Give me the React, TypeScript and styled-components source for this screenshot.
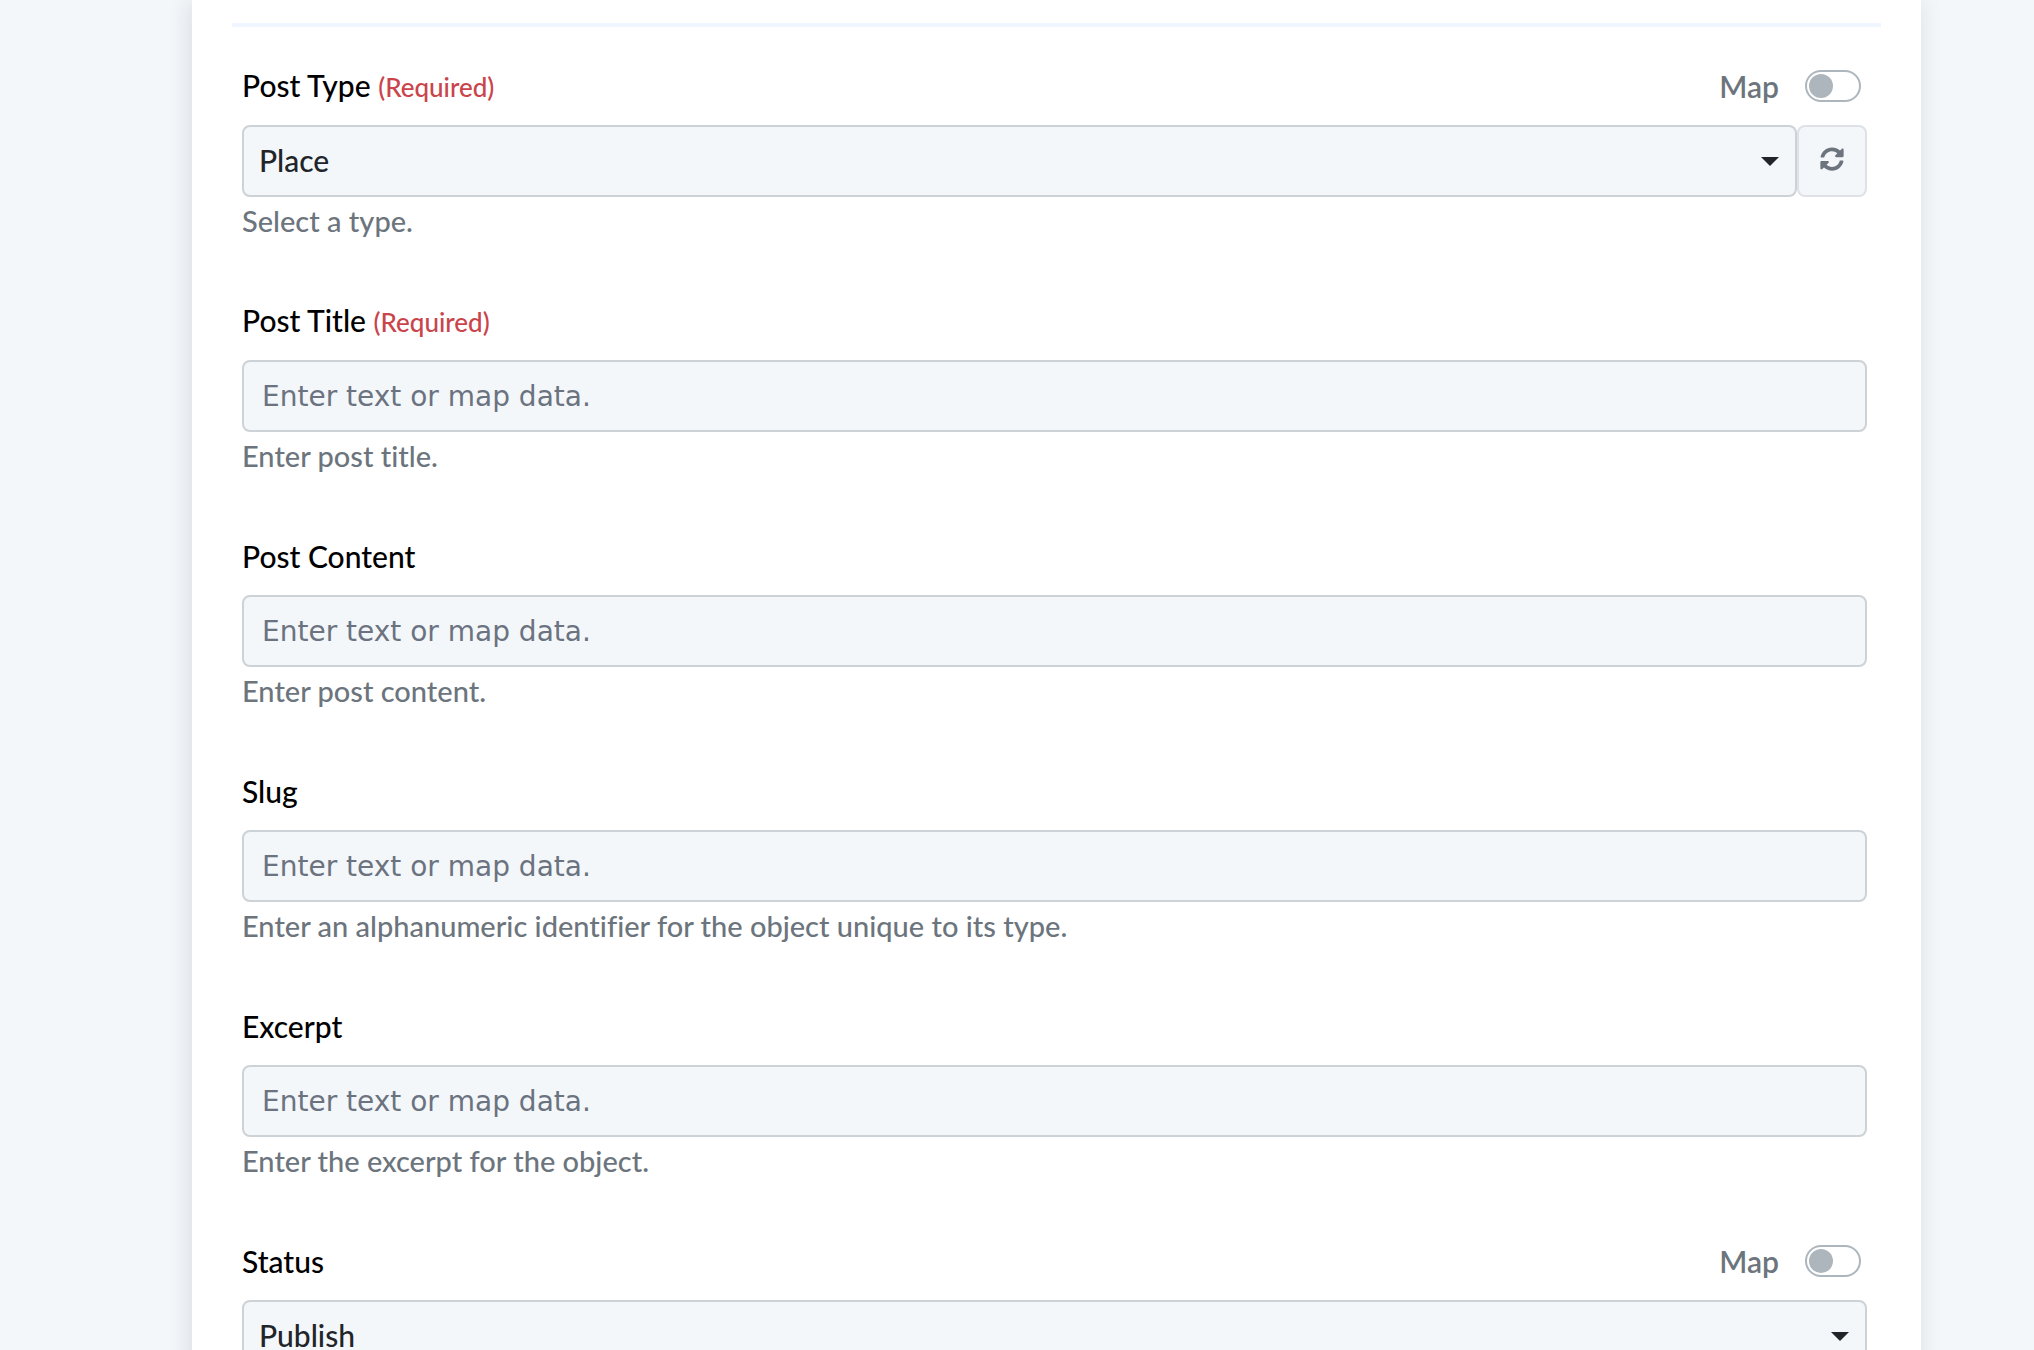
import { useId, useState } from "react";
import type { ReactNode } from "react";
import styled, { createGlobalStyle } from "styled-components";
import { FaSyncAlt } from "react-icons/fa";

const GlobalStyle = createGlobalStyle`
  *, *::before, *::after { box-sizing: border-box; }
  body {
    margin: 0;
    background: #f3f7fa;
    color: #212529;
    font-family: Lato, "Liberation Sans", sans-serif;
    font-weight: 500;
    font-size: 30px;
    font-variant-ligatures: none;
  }
`;

const Page = styled.div`
  height: 100vh;
  overflow: hidden;
  padding: 0 113px 0 192px;
`;

const Card = styled.main`
  min-height: 100%;
  padding: 23px 40px 40px;
  background: #fff;
  box-shadow: -2px 0 22px rgba(33, 37, 41, 0.12);
`;

const Form = styled.form`
  display: flex;
  flex-direction: column;
  gap: 62px;
  padding: 39px 14px 0 10px;
  border-top: 4px solid #f0f6ff;
`;

const FieldBox = styled.div`
  display: flex;
  flex-direction: column;
`;

const FieldHead = styled.div`
  display: flex;
  align-items: center;
  justify-content: space-between;
  height: 40px;
  margin-bottom: 19px;
  padding-right: 6px;
`;

const Label = styled.label`
  color: #000;
  line-height: 40px;
`;

const Required = styled.span`
  color: #ca444c;
  font-size: 26px;
`;

const Help = styled.p`
  margin: 6px 0 0;
  color: #6c757d;
  font-size: 29px;
  line-height: 36px;
`;

const MapLabel = styled.label`
  display: flex;
  align-items: center;
  gap: 26px;
  color: #6c757d;
  font-weight: 600;
  line-height: 40px;
`;

const Switch = styled.input`
  appearance: none;
  width: 56px;
  height: 32px;
  margin: 0;
  padding: 2px;
  border: 2px solid #adb5bd;
  border-radius: 16px;
  background: #fff;
  cursor: pointer;

  &::before {
    content: "";
    display: block;
    width: 24px;
    height: 24px;
    border-radius: 50%;
    background: #adb5bd;
  }

  &:checked::before {
    margin-left: auto;
  }
`;

const TextInput = styled.input`
  width: 100%;
  height: 72px;
  padding: 0 18px;
  border: 2px solid #cdd2d6;
  border-radius: 8px;
  background: #f3f7fa;
  color: #212529;
  font: 400 28px "DejaVu Sans", sans-serif;

  &::placeholder {
    color: #6b7280;
    opacity: 1;
  }
`;

const ControlRow = styled.div`
  display: flex;
`;

const SelectBox = styled.div`
  position: relative;
  flex: 1;
`;

const Select = styled.select`
  appearance: none;
  display: block;
  width: 100%;
  height: 72px;
  padding: 0 48px 2px 15px;
  border: 2px solid #cdd2d6;
  border-radius: 8px;
  background: #f3f7fa;
  color: #212529;
  font: inherit;
`;

const Caret = styled.svg`
  position: absolute;
  top: 32px;
  right: 18px;
  width: 18px;
  height: 9px;
  fill: #212529;
  pointer-events: none;
`;

const RefreshButton = styled.button`
  display: grid;
  place-items: center;
  width: 70px;
  height: 72px;
  padding: 0 0 4px;
  border: 2px solid #dee1e6;
  border-radius: 8px;
  background: #f3f7fa;
  color: #6c757d;
  cursor: pointer;
`;

interface FieldProps {
  label: string;
  help?: string;
  required?: boolean;
  mappable?: boolean;
  children: (id: string) => ReactNode;
}

function Field({ label, help, required, mappable, children }: FieldProps) {
  const id = useId();
  const [mapped, setMapped] = useState(false);
  return (
    <FieldBox>
      <FieldHead>
        <Label htmlFor={id}>
          {label} {required && <Required>(Required)</Required>}
        </Label>
        {mappable && (
          <MapLabel>
            Map
            <Switch type="checkbox" checked={mapped} onChange={(e) => setMapped(e.target.checked)} />
          </MapLabel>
        )}
      </FieldHead>
      {children(id)}
      {help && <Help>{help}</Help>}
    </FieldBox>
  );
}

function Dropdown({ id, options }: { id: string; options: string[] }) {
  return (
    <SelectBox>
      <Select id={id} defaultValue={options[0]}>
        {options.map((o) => (
          <option key={o}>{o}</option>
        ))}
      </Select>
      <Caret viewBox="0 0 18 9" aria-hidden="true">
        <path d="M0 0h18L9 9z" />
      </Caret>
    </SelectBox>
  );
}

const textFields = [
  { label: "Post Title", help: "Enter post title.", required: true },
  { label: "Post Content", help: "Enter post content." },
  { label: "Slug", help: "Enter an alphanumeric identifier for the object unique to its type." },
  { label: "Excerpt", help: "Enter the excerpt for the object." },
];

export default function App() {
  return (
    <Page>
      <GlobalStyle />
      <Card>
        <Form onSubmit={(e) => e.preventDefault()}>
          <Field label="Post Type" help="Select a type." required mappable>
            {(id) => (
              <ControlRow>
                <Dropdown id={id} options={["Place"]} />
                <RefreshButton type="button" aria-label="Refresh">
                  <FaSyncAlt size={24} />
                </RefreshButton>
              </ControlRow>
            )}
          </Field>
          {textFields.map((f) => (
            <Field key={f.label} {...f}>
              {(id) => <TextInput id={id} type="text" placeholder="Enter text or map data." />}
            </Field>
          ))}
          <Field label="Status" mappable>
            {(id) => <Dropdown id={id} options={["Publish"]} />}
          </Field>
        </Form>
      </Card>
    </Page>
  );
}
